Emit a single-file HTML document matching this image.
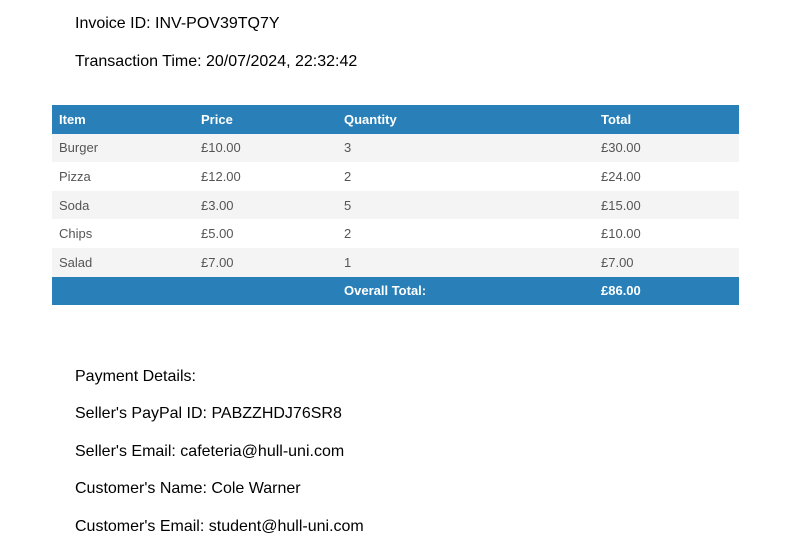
<!DOCTYPE html>
<html><head><style>
body{margin:0;background:#fff;font-family:"Liberation Sans",sans-serif;}
.t{position:absolute;left:75px;font-size:16px;color:#000;line-height:18px;}
table{position:absolute;left:52px;top:105px;width:687px;border-collapse:collapse;font-size:13px;}
td,th{padding:0 0 0 7px;height:28.6px;text-align:left;}
th{background:#2980b9;color:#fff;font-weight:bold;}
td{color:#555;}
tr.g td{background:#f4f4f4;}
tr.f td{background:#2980b9;color:#fff;font-weight:bold;}
</style></head><body>
<div class="t" style="top:15px">Invoice ID: INV-POV39TQ7Y</div>
<div class="t" style="top:53px">Transaction Time: 20/07/2024, 22:32:42</div>
<table>
<colgroup><col style="width:142px"><col style="width:143px"><col style="width:257px"><col></colgroup>
<tr><th>Item</th><th>Price</th><th>Quantity</th><th>Total</th></tr>
<tr class="g"><td>Burger</td><td>£10.00</td><td>3</td><td>£30.00</td></tr>
<tr><td>Pizza</td><td>£12.00</td><td>2</td><td>£24.00</td></tr>
<tr class="g"><td>Soda</td><td>£3.00</td><td>5</td><td>£15.00</td></tr>
<tr><td>Chips</td><td>£5.00</td><td>2</td><td>£10.00</td></tr>
<tr class="g"><td>Salad</td><td>£7.00</td><td>1</td><td>£7.00</td></tr>
<tr class="f"><td></td><td></td><td>Overall Total:</td><td>£86.00</td></tr>
</table>
<div class="t" style="top:368px">Payment Details:</div>
<div class="t" style="top:405px">Seller's PayPal ID: PABZZHDJ76SR8</div>
<div class="t" style="top:443px">Seller's Email: cafeteria@hull-uni.com</div>
<div class="t" style="top:480px">Customer's Name: Cole Warner</div>
<div class="t" style="top:518px">Customer's Email: student@hull-uni.com</div>
</body></html>
